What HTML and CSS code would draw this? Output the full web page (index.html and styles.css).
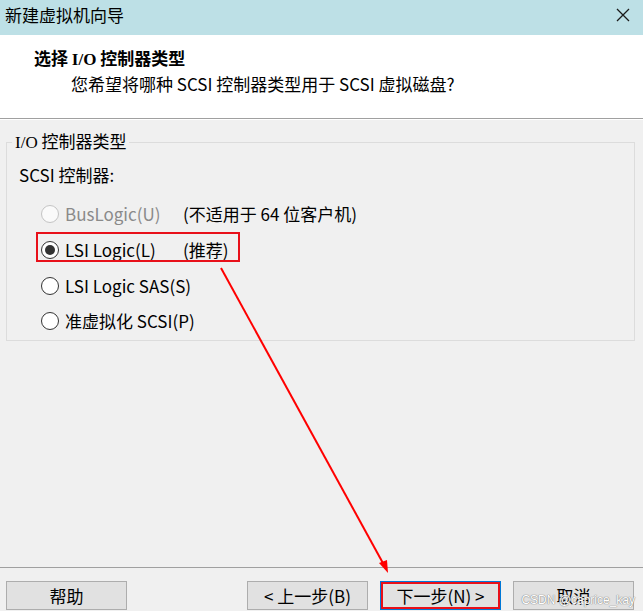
FILE: index.html
```html
<!DOCTYPE html>
<html lang="zh-CN">
<head>
<meta charset="utf-8">
<title>新建虚拟机向导</title>
<link rel="stylesheet" href="styles.css">
</head>
<body>
<div class="window">
  <div class="titlebar">
    <span class="title">新建虚拟机向导</span>
    <svg class="close" width="14" height="14" viewBox="0 0 14 14"><path d="M1 1 L13 13 M13 1 L1 13" stroke="#1a1a1a" stroke-width="1.3" fill="none"/></svg>
  </div>
  <div class="header">
    <div class="h-title">选择 <span class="serif">I/O</span> 控制器类型</div>
    <div class="h-sub">您希望将哪种 SCSI 控制器类型用于 SCSI 虚拟磁盘?</div>
  </div>
  <div class="content">
    <fieldset class="group">
      <legend><span class="serif">I/O</span> 控制器类型</legend>
      <div class="label">SCSI 控制器:</div>
      <div class="options">
        <div class="row disabled">
          <span class="radio"></span><span class="opt">BusLogic(U)</span><span class="note">(不适用于 64 位客户机)</span>
        </div>
        <div class="row marked">
          <span class="radio checked"></span><span class="opt">LSI Logic(L)</span><span class="note">(推荐)</span>
          <span class="redbox"></span>
        </div>
        <div class="row">
          <span class="radio"></span><span class="opt">LSI Logic SAS(S)</span><span class="note"></span>
        </div>
        <div class="row">
          <span class="radio"></span><span class="opt">准虚拟化 SCSI(P)</span><span class="note"></span>
        </div>
      </div>
    </fieldset>
  </div>
  <div class="footer">
    <button class="btn help">帮助</button>
    <button class="btn back">&lt; 上一步(B)</button>
    <button class="btn next">下一步(N) &gt;</button>
    <button class="btn">取消</button>
  </div>
  <svg class="arrow" width="643" height="611" viewBox="0 0 643 611">
    <line x1="221" y1="268" x2="384" y2="565" stroke="#ff0000" stroke-width="2"/>
    <path d="M388 573 L379 563 L387 560 Z" fill="#ff0000"/>
  </svg>
  <div class="watermark">CSDN @caprice_kay</div>
</div>
</body>
</html>
```
FILE: styles.css
```css
* { box-sizing: border-box; }
html, body { margin: 0; padding: 0; }
body {
  width: 643px;
  height: 611px;
  overflow: hidden;
  background: #f0f0f0;
  font-family: "Noto Sans CJK SC", "Noto Sans", sans-serif;
  font-size: 17px;
  color: #000;
}
.window {
  position: relative;
  width: 643px;
  height: 611px;
  display: flex;
  flex-direction: column;
}
.serif { font-family: "Liberation Serif", "Noto Sans CJK SC", serif; }
.titlebar {
  height: 35px;
  background: #bde0e6;
  display: flex;
  align-items: center;
  justify-content: space-between;
  padding: 0 13px 6px 5px;
}
.titlebar .title { line-height: 22px; }
.header {
  height: 84px;
  background: #fff;
  border-bottom: 1px solid #a0a0a0;
  box-shadow: 0 1px 0 #fff;
  padding: 12px 0 0 34px;
}
.h-title { font-weight: bold; line-height: 22px; }
.h-sub { line-height: 22px; margin-top: 2px; padding-left: 37px; }
.content {
  flex: 1;
  padding: 11px 8px 0 6px;
}
.group {
  margin: 0;
  padding: 0 0 2px 0;
  border: 1px solid #dcdcdc;
  min-width: 0;
}
.group legend {
  padding: 0 3px;
  margin-left: 5px;
  line-height: 22px;
}
.label {
  line-height: 22px;
  padding-left: 12px;
  margin-top: 10px;
}
.options { margin-top: 10px; }
.row {
  position: relative;
  height: 36px;
  display: grid;
  grid-template-columns: 18px 112px auto;
  column-gap: 6px;
  align-items: center;
  padding-left: 34px;
}
.row:last-child { height: 34px; }
.radio {
  width: 18px;
  height: 18px;
  border: 1px solid #333;
  border-radius: 50%;
  background: #fff;
  display: flex;
  align-items: center;
  justify-content: center;
}
.radio.checked::after {
  content: "";
  width: 10px;
  height: 10px;
  border-radius: 50%;
  background: #333;
}
.row.disabled .radio { border-color: #c4c4c4; background: #fafafa; }
.row.disabled .opt { color: #8a8a8a; }
.opt, .note { white-space: nowrap; line-height: 22px; }
.redbox {
  position: absolute;
  left: 29px;
  top: 0px;
  width: 204px;
  height: 30px;
  border: 2px solid #e8101a;
}
.footer {
  height: 44px;
  border-top: 1px solid #a0a0a0;
  display: flex;
  gap: 12px;
  padding: 13px 9px 1px 6px;
}
.btn {
  width: 121px;
  height: 29px;
  background: #e1e1e1;
  border: 1px solid #adadad;
  font-family: inherit;
  font-size: 17px;
  color: #000;
  padding: 0;
  line-height: 25px;
}
.btn.help { margin-right: auto; }
.btn.next {
  border-color: #0078d7;
  box-shadow: inset 0 0 0 2px #e8101a;
}
.arrow {
  position: absolute;
  left: 0;
  top: 0;
  pointer-events: none;
}
.watermark {
  position: absolute;
  right: 8px;
  bottom: 4px;
  font-family: "Liberation Sans", sans-serif;
  font-size: 12px;
  color: #fff;
  text-shadow: 0 0 1px #777, 0 0 1px #777;
  pointer-events: none;
}
```
